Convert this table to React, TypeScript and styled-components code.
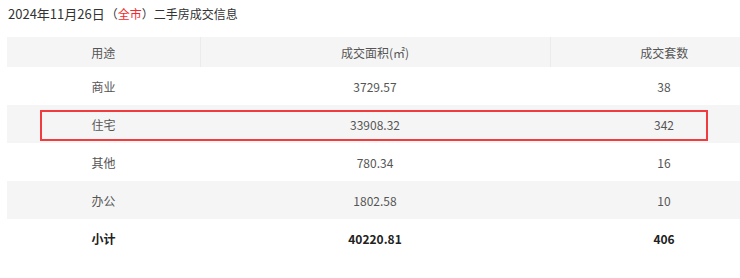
import React from "react";
import styled, { createGlobalStyle } from "styled-components";

const GlobalStyle = createGlobalStyle`
  html, body {
    margin: 0;
    padding: 0;
    background: #fff;
    overflow: hidden;
  }
  body {
    font-family: "Noto Sans CJK SC", "Noto Sans", sans-serif;
  }
`;

const Page = styled.div`
  width: 733px;
  padding-left: 7px;
  overflow: hidden;
`;

const Title = styled.div`
  height: 37px;
  line-height: 28px;
  font-size: 13px;
  color: #333;
  padding-left: 1px;
  white-space: nowrap;
`;

const Place = styled.span`
  font-size: 12px;
  margin-left: 1px;
`;

const Red = styled.span`
  color: #f2282c;
`;

const TableWrap = styled.div`
  position: relative;
  width: 771px;
`;

const Table = styled.table`
  width: 771px;
  border-collapse: collapse;
  table-layout: fixed;
  font-size: 12px;
  color: #555;
`;

const HeadCell = styled.th`
  height: 30px;
  padding: 0;
  font-weight: normal;
  background: #f5f5f5;
  border-right: 1px solid #ebebeb;
  text-align: center;
  &:last-child {
    border-right: none;
  }
`;

const Row = styled.tr<{ striped?: boolean }>`
  background: ${(p) => (p.striped ? "#f5f5f5" : "#fff")};
`;

const Cell = styled.td<{ bold?: boolean }>`
  height: 38px;
  padding: 0;
  text-align: center;
  font-weight: ${(p) => (p.bold ? "bold" : "normal")};
  color: ${(p) => (p.bold ? "#222" : "#555")};
`;

const Highlight = styled.div`
  position: absolute;
  left: 33px;
  top: 73px;
  width: 664px;
  height: 27px;
  border: 2px solid #f03c3f;
  pointer-events: none;
`;

const rows = [
  { use: "商业", area: "3729.57", count: "38" },
  { use: "住宅", area: "33908.32", count: "342" },
  { use: "其他", area: "780.34", count: "16" },
  { use: "办公", area: "1802.58", count: "10" },
];

export default function App() {
  return (
    <Page>
      <GlobalStyle />
      <Title>
        2024年11月26日
        <Place>
          （<Red>全市</Red>）二手房成交信息
        </Place>
      </Title>
      <TableWrap>
        <Table>
          <colgroup>
            <col style={{ width: 193 }} />
            <col style={{ width: 350 }} />
            <col style={{ width: 228 }} />
          </colgroup>
          <thead>
            <tr>
              <HeadCell>用途</HeadCell>
              <HeadCell>成交面积(㎡)</HeadCell>
              <HeadCell>成交套数</HeadCell>
            </tr>
          </thead>
          <tbody>
            {rows.map((r, i) => (
              <Row key={r.use} striped={i % 2 === 1}>
                <Cell>{r.use}</Cell>
                <Cell>{r.area}</Cell>
                <Cell>{r.count}</Cell>
              </Row>
            ))}
            <Row>
              <Cell bold>小计</Cell>
              <Cell bold>40220.81</Cell>
              <Cell bold>406</Cell>
            </Row>
          </tbody>
        </Table>
        <Highlight />
      </TableWrap>
    </Page>
  );
}
